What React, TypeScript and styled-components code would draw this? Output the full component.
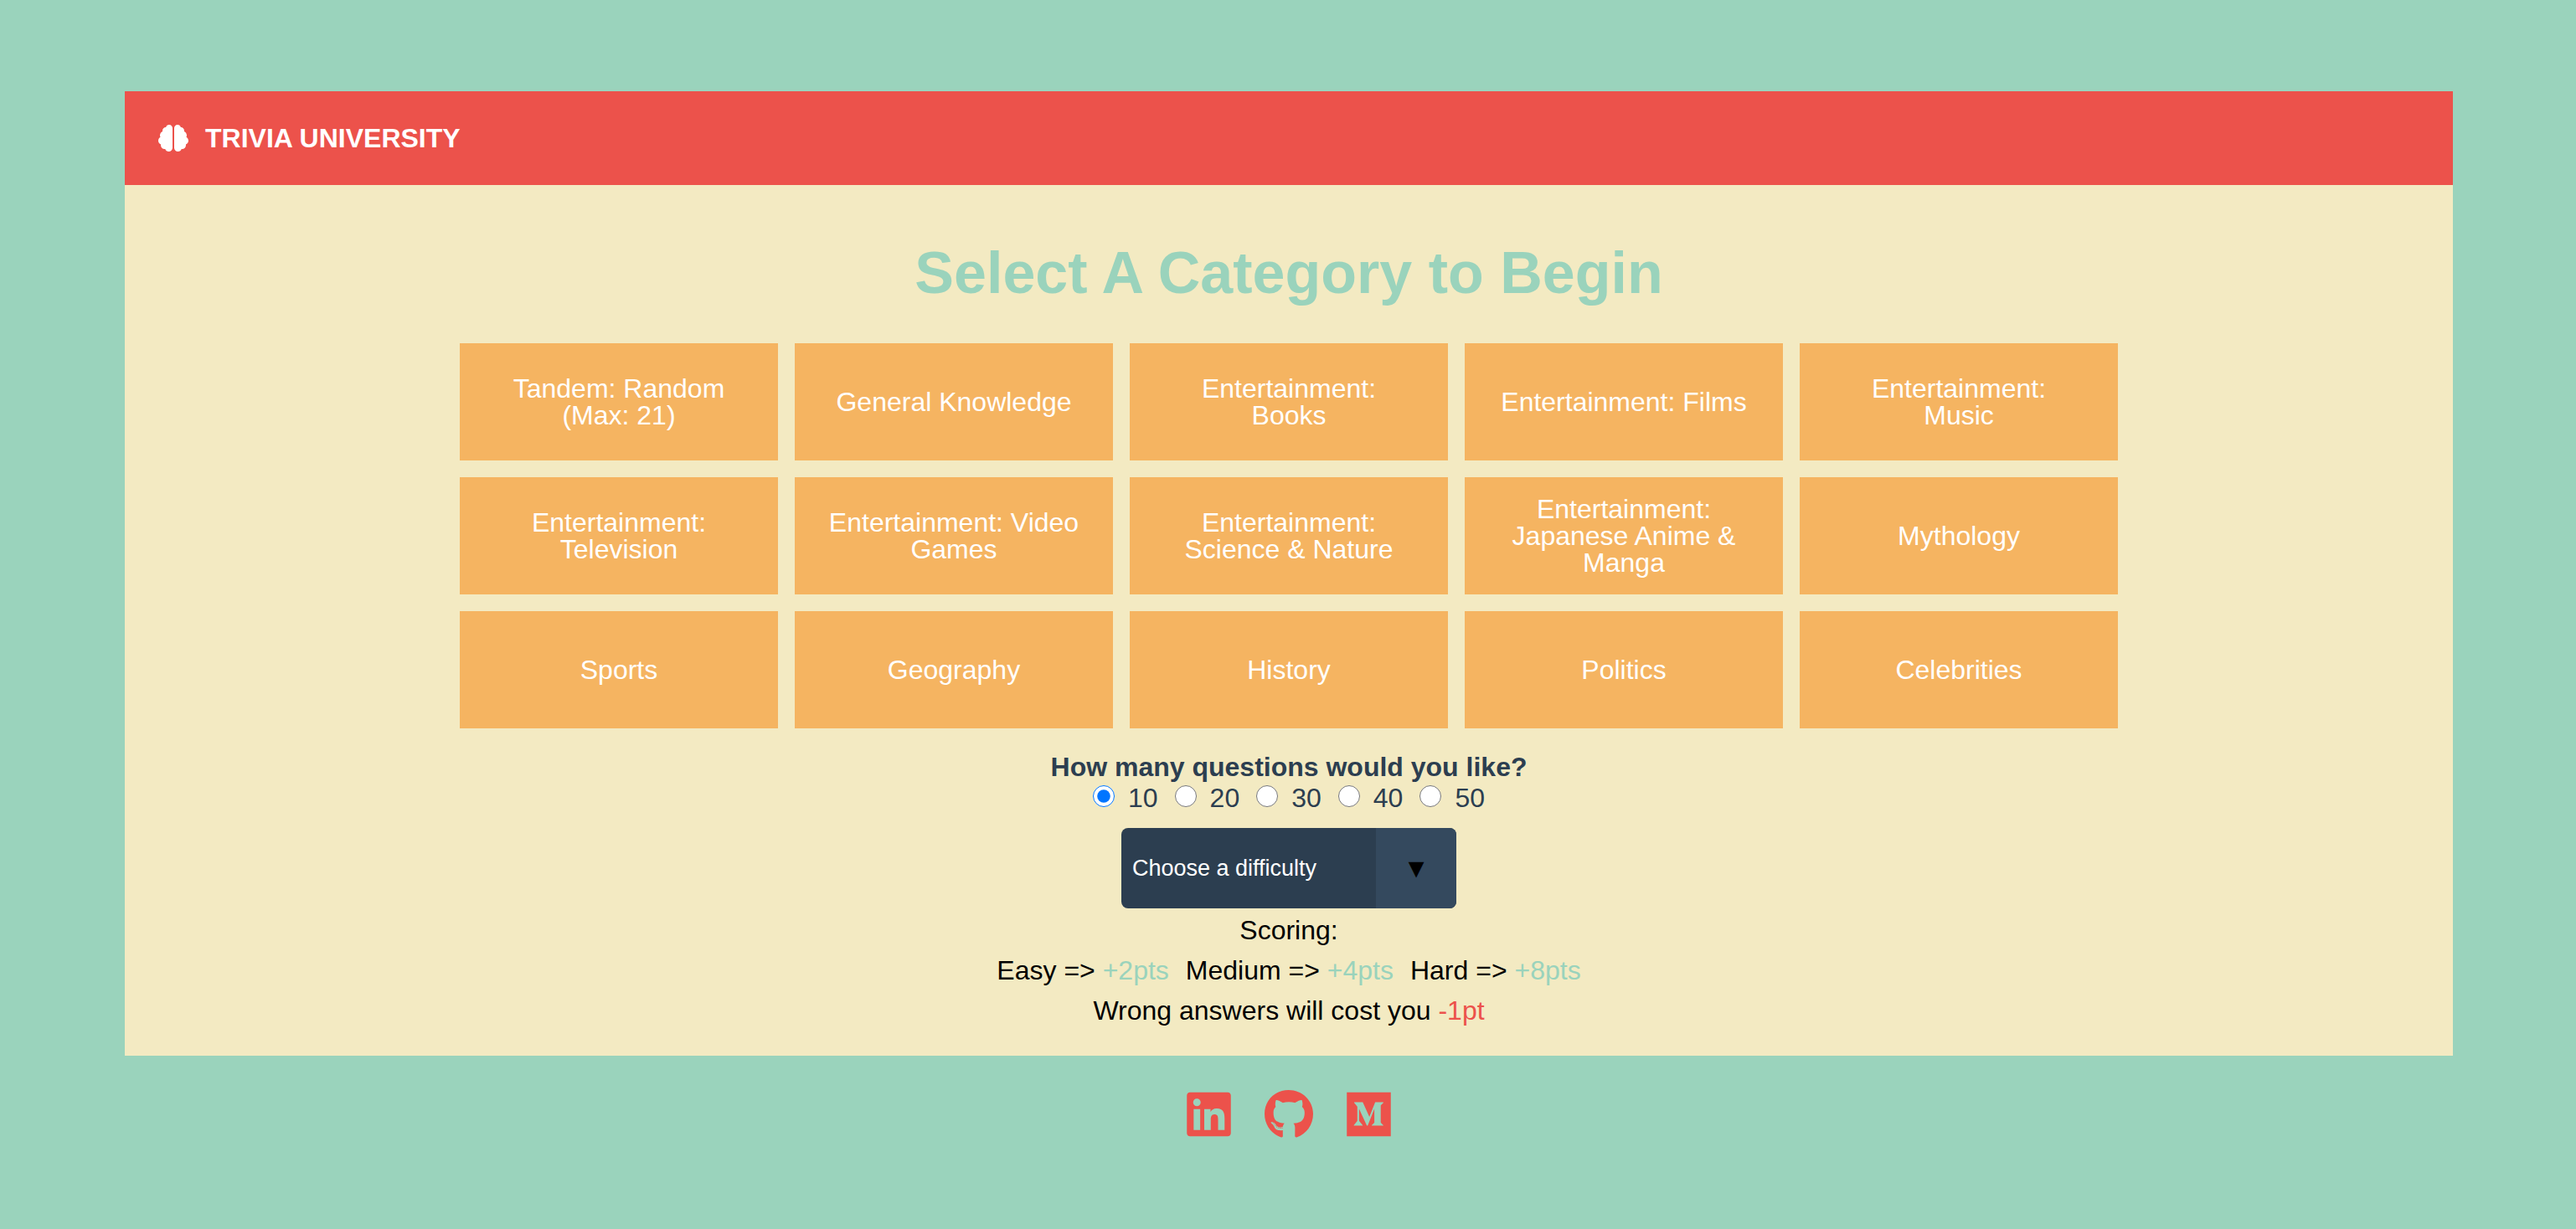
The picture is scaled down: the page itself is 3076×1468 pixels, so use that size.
import React from "react";
import styled, { createGlobalStyle } from "styled-components";
import { FaBrain, FaGithub, FaLinkedin, FaMedium } from "react-icons/fa";

const colors = {
  mint: "#9ad3bc",
  red: "#ec524b",
  cream: "#f3eac2",
  orange: "#f5b461",
  navy: "#2c3e50",
  slate: "#34495e",
};

const GlobalStyle = createGlobalStyle`
  *, *::before, *::after { box-sizing: border-box; }
  body {
    margin: 0;
    background: ${colors.mint};
    color: #000;
    font-family: "Liberation Sans", Arial, Helvetica, sans-serif;
    font-size: 32px;
    line-height: 32px;
  }
`;

const Page = styled.div`
  display: flex;
  flex-direction: column;
  align-items: center;
  padding: 109px 147px 0 149px;
`;

const Card = styled.div`
  width: 100%;
  background: ${colors.cream};
`;

const Header = styled.header`
  display: flex;
  align-items: center;
  gap: 20px;
  padding: 40px;
  background: ${colors.red};
  color: #fff;
  font-weight: bold;
`;

const BrainIcon = styled(FaBrain)`
  width: 36px;
  height: 32px;
`;

const Main = styled.main`
  display: flex;
  flex-direction: column;
  align-items: center;
  padding: 70px 40px 30px;
`;

const Title = styled.h1`
  margin: 0 0 49px;
  color: ${colors.mint};
  font-size: 70px;
  line-height: 70px;
`;

const CategoryGrid = styled.div`
  display: grid;
  grid-template-columns: repeat(5, 1fr);
  gap: 20px;
  width: 100%;
  max-width: 1980px;
`;

const CategoryButton = styled.button`
  min-height: 140px;
  padding: 20px 40px;
  border: 0;
  background: ${colors.orange};
  color: #fff;
  font: inherit;
  cursor: pointer;
`;

const Form = styled.form`
  display: flex;
  flex-direction: column;
  align-items: center;
  margin-top: 30px;
  color: ${colors.navy};
`;

const Amounts = styled.fieldset`
  margin: 0;
  padding: 0;
  border: 0;
`;

const Question = styled.legend`
  margin: 0 auto 5px;
  padding: 0;
  font-weight: bold;
`;

const AmountList = styled.div`
  display: flex;
  justify-content: center;
  gap: 20px;
`;

const AmountLabel = styled.label`
  display: flex;
  align-items: baseline;
  gap: 16px;
`;

const Radio = styled.input`
  width: 26px;
  height: 26px;
  margin: 0;
`;

const SelectBox = styled.div`
  display: grid;
  grid-template-columns: 1fr 96px;
  width: 400px;
  height: 96px;
  margin-top: 20px;
  overflow: hidden;
  border-radius: 8px;
  background: ${colors.navy};
`;

const Select = styled.select`
  grid-area: 1 / 1 / 2 / 3;
  appearance: none;
  padding: 0 109px 0 13px;
  border: 0;
  background: transparent;
  color: #fff;
  font-family: inherit;
  font-size: 27px;
`;

const Arrow = styled.span`
  grid-area: 1 / 2 / 2 / 3;
  display: flex;
  align-items: center;
  justify-content: center;
  background: ${colors.slate};
  color: #000;
  pointer-events: none;
`;

const Scoring = styled.section`
  margin-top: 2px;
  line-height: 48px;
  text-align: center;
`;

const Line = styled.p`
  display: flex;
  justify-content: center;
  gap: 20px;
  margin: 0;
`;

const Points = styled.span<{ $negative?: boolean }>`
  color: ${(p) => (p.$negative ? colors.red : colors.mint)};
`;

const Footer = styled.footer`
  display: flex;
  justify-content: center;
  gap: 40px;
  padding: 40px;
`;

const SocialLink = styled.a<{ $width: number }>`
  display: flex;
  color: ${colors.red};

  svg {
    width: ${(p) => p.$width}px;
    height: 60px;
  }
`;

const categories = [
  "Tandem: Random (Max: 21)",
  "General Knowledge",
  "Entertainment: Books",
  "Entertainment: Films",
  "Entertainment: Music",
  "Entertainment: Television",
  "Entertainment: Video Games",
  "Entertainment: Science & Nature",
  "Entertainment: Japanese Anime & Manga",
  "Mythology",
  "Sports",
  "Geography",
  "History",
  "Politics",
  "Celebrities",
];

const amounts = [10, 20, 30, 40, 50];

const scores = [
  { level: "Easy", points: "+2pts" },
  { level: "Medium", points: "+4pts" },
  { level: "Hard", points: "+8pts" },
];

export default function App() {
  return (
    <>
      <GlobalStyle />
      <Page>
        <Card>
          <Header>
            <BrainIcon aria-hidden="true" />
            <span>TRIVIA UNIVERSITY</span>
          </Header>
          <Main>
            <Title>Select A Category to Begin</Title>
            <CategoryGrid>
              {categories.map((name) => (
                <CategoryButton key={name} type="button">
                  {name}
                </CategoryButton>
              ))}
            </CategoryGrid>
            <Form>
              <Amounts>
                <Question>How many questions would you like?</Question>
                <AmountList>
                  {amounts.map((n) => (
                    <AmountLabel key={n}>
                      <Radio type="radio" name="amount" value={n} defaultChecked={n === 10} />
                      {n}
                    </AmountLabel>
                  ))}
                </AmountList>
              </Amounts>
              <SelectBox>
                <Select aria-label="Difficulty" defaultValue="">
                  <option value="">Choose a difficulty</option>
                  <option value="easy">Easy</option>
                  <option value="medium">Medium</option>
                  <option value="hard">Hard</option>
                </Select>
                <Arrow aria-hidden="true">▼</Arrow>
              </SelectBox>
            </Form>
            <Scoring>
              <Line>Scoring:</Line>
              <Line>
                {scores.map(({ level, points }) => (
                  <span key={level}>
                    {level} =&gt; <Points>{points}</Points>
                  </span>
                ))}
              </Line>
              <Line>
                <span>
                  Wrong answers will cost you <Points $negative>-1pt</Points>
                </span>
              </Line>
            </Scoring>
          </Main>
        </Card>
        <Footer>
          <SocialLink href="#linkedin" aria-label="LinkedIn" $width={53}>
            <FaLinkedin />
          </SocialLink>
          <SocialLink href="#github" aria-label="GitHub" $width={58}>
            <FaGithub />
          </SocialLink>
          <SocialLink href="#medium" aria-label="Medium" $width={53}>
            <FaMedium />
          </SocialLink>
        </Footer>
      </Page>
    </>
  );
}
